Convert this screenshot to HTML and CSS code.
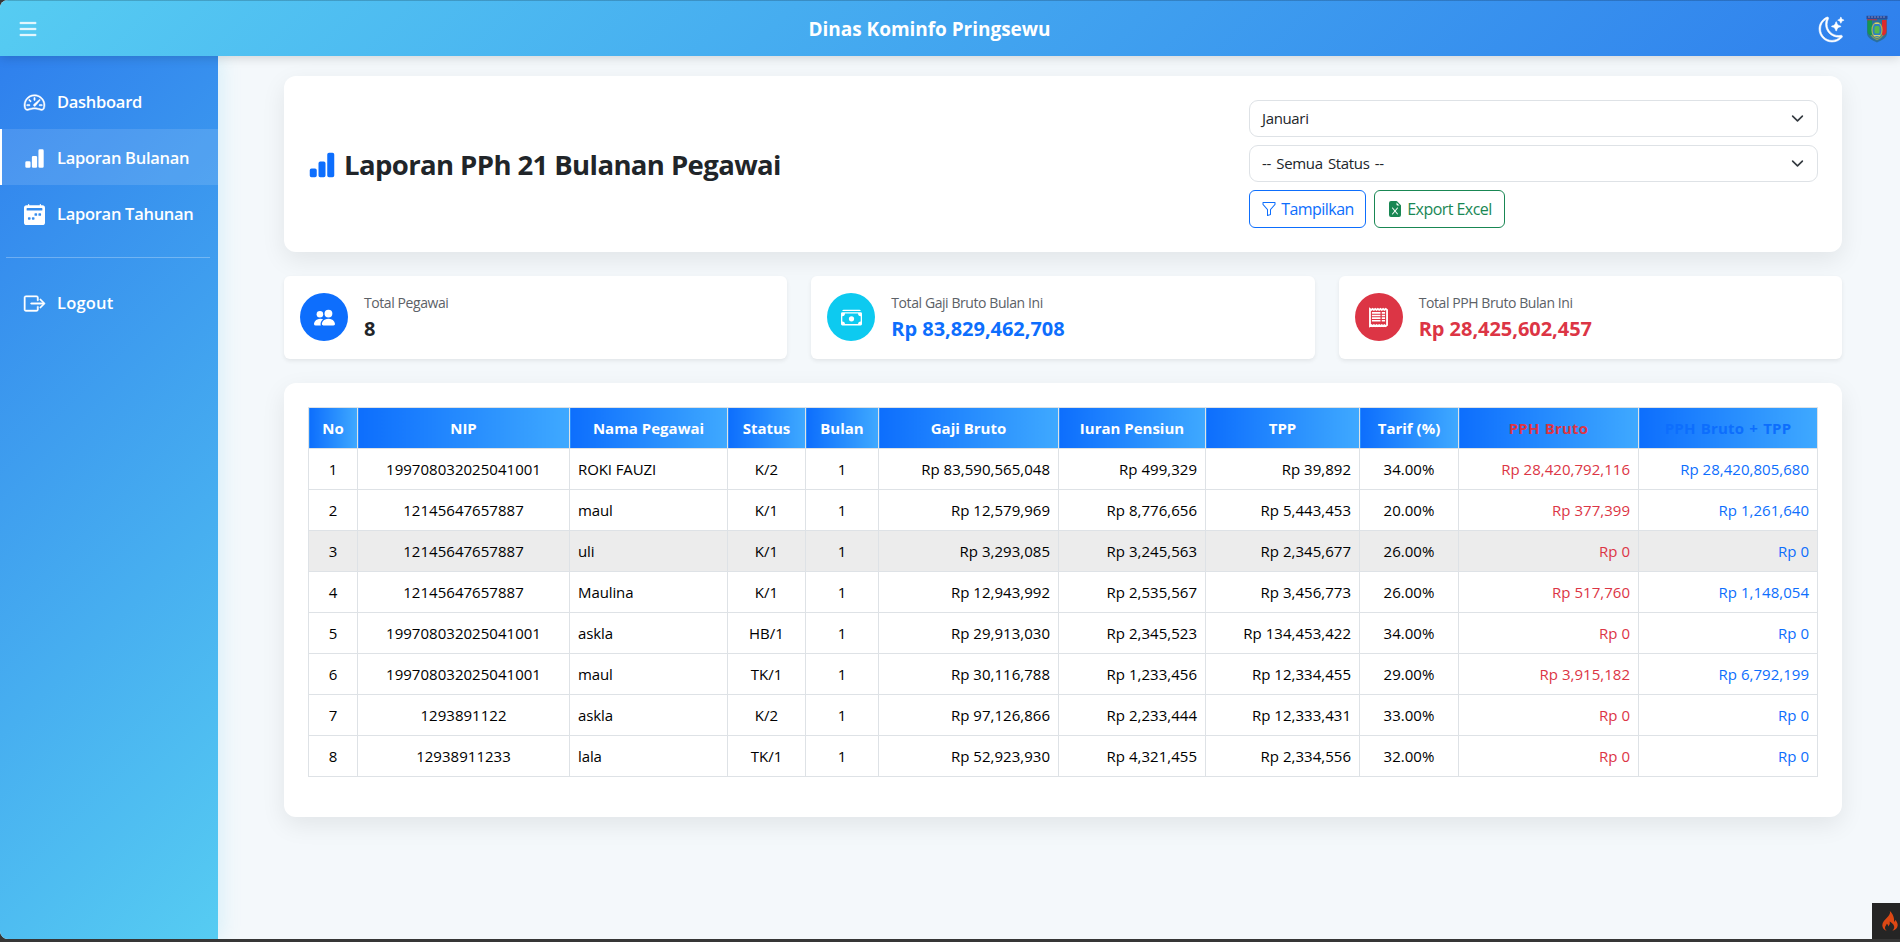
FILE: index.html
```html
<!DOCTYPE html>
<html lang="id">
<head>
<meta charset="utf-8">
<title>Laporan PPh 21 Bulanan Pegawai</title>
<link rel="stylesheet" href="styles.css">
</head>
<body>
<div class="app">
  <header class="topbar">
    <svg class="menu-icon" viewBox="0 0 16 16" fill="currentColor"><path fill-rule="evenodd" d="M2.5 12a.5.5 0 0 1 .5-.5h10a.5.5 0 0 1 0 1H3a.5.5 0 0 1-.5-.5zm0-4a.5.5 0 0 1 .5-.5h10a.5.5 0 0 1 0 1H3a.5.5 0 0 1-.5-.5zm0-4a.5.5 0 0 1 .5-.5h10a.5.5 0 0 1 0 1H3a.5.5 0 0 1-.5-.5z"/></svg>
    <div class="brand">Dinas Kominfo Pringsewu</div>
    <div class="topbar-right">
      <svg class="moon-icon" viewBox="0 0 16 16" fill="currentColor"><path d="M6 .278a.768.768 0 0 1 .08.858 7.208 7.208 0 0 0-.878 3.46c0 4.021 3.278 7.277 7.318 7.277.527 0 1.04-.055 1.533-.16a.787.787 0 0 1 .81.316.733.733 0 0 1-.031.893A8.349 8.349 0 0 1 8.344 16C3.734 16 0 12.286 0 7.71 0 4.266 2.114 1.312 5.124.06A.752.752 0 0 1 6 .278zM4.858 1.311A7.269 7.269 0 0 0 1.025 7.71c0 4.02 3.279 7.276 7.319 7.276a7.316 7.316 0 0 0 5.205-2.162c-.337.042-.68.063-1.029.063-4.61 0-8.343-3.714-8.343-8.29 0-1.167.242-2.278.681-3.286z"/><path d="M10.794 3.148a.217.217 0 0 1 .412 0l.387 1.162c.173.518.579.924 1.097 1.097l1.162.387a.217.217 0 0 1 0 .412l-1.162.387a1.734 1.734 0 0 0-1.097 1.097l-.387 1.162a.217.217 0 0 1-.412 0l-.387-1.162A1.734 1.734 0 0 0 9.31 6.593l-1.162-.387a.217.217 0 0 1 0-.412l1.162-.387a1.734 1.734 0 0 0 1.097-1.097l.387-1.162zM13.863.099a.145.145 0 0 1 .274 0l.258.774c.115.346.386.617.732.732l.774.258a.145.145 0 0 1 0 .274l-.774.258a1.156 1.156 0 0 0-.732.732l-.258.774a.145.145 0 0 1-.274 0l-.258-.774a1.156 1.156 0 0 0-.732-.732l-.774-.258a.145.145 0 0 1 0-.274l.774-.258c.346-.115.617-.386.732-.732L13.863.1z"/></svg>
      <svg class="crest" viewBox="0 0 22 28">
        <path d="M1 4h20v14c0 5-5 7-10 9.500C6 25 1 23 1 18z" fill="#2a6f9e"/>
        <path d="M1.500 5H6v16.500C3 20 1.500 19 1.500 16z" fill="#16954f"/>
        <path d="M16 5h4.500v11c0 3-1.500 4-4.500 5.500z" fill="#dc2a2c"/>
        <path d="M.5.800h21v3.400H.5z" fill="#274b9a"/>
        <path d="M2 2h18" stroke="#7d8fc4" stroke-width="1" stroke-dasharray="2 1"/>
        <path d="M1 4.800h10" stroke="#c9343a" stroke-width="1"/>
        <ellipse cx="11" cy="15" rx="5" ry="7.500" fill="#2d7fc4" stroke="#a9b45c" stroke-width="1.200"/>
        <rect x="8.500" y="11" width="5" height="7.500" rx="1.500" fill="#55b84e"/>
        <path d="M9 8.500h4M8 20.500h6" stroke="#d9cf7a" stroke-width="1.200"/>
        <path d="M5 20c2 3 4 4 6 4.500 2-.5 4-1.500 6-4.500" fill="none" stroke="#8b9a55" stroke-width="1.300"/>
      </svg>
    </div>
  </header>
  <div class="layout">
    <nav class="sidebar">
      <a class="nav-item"><svg class="nav-icon bold-icon" viewBox="0 0 16 16" fill="currentColor"><path d="M8 4a.5.5 0 0 1 .5.5V6a.5.5 0 0 1-1 0V4.500A.5.5 0 0 1 8 4zM3.732 5.732a.5.5 0 0 1 .707 0l.915.914a.5.5 0 1 1-.708.708l-.914-.915a.5.5 0 0 1 0-.707zM2 10a.5.5 0 0 1 .5-.5h1.586a.5.5 0 0 1 0 1H2.500A.5.5 0 0 1 2 10zm9.500 0a.5.5 0 0 1 .5-.5h1.500a.5.5 0 0 1 0 1H12a.5.5 0 0 1-.5-.5zm.754-4.246a.389.389 0 0 0-.527-.02L7.547 9.310a.91.91 0 1 0 1.302 1.258l3.434-4.297a.389.389 0 0 0-.029-.518z"/><path fill-rule="evenodd" d="M0 10a8 8 0 1 1 15.547 2.661c-.442 1.253-1.845 1.602-2.932 1.250C11.309 13.488 9.475 13 8 13c-1.474 0-3.310.488-4.615.911-1.087.352-2.490.003-2.932-1.250A7.988 7.988 0 0 1 0 10zm8-7a7 7 0 0 0-6.603 9.329c.203.575.923.876 1.680.630C4.397 12.533 6.358 12 8 12s3.604.532 4.923.960c.757.245 1.477-.056 1.680-.631A7 7 0 0 0 8 3z"/></svg><span>Dashboard</span></a>
      <a class="nav-item active"><svg class="nav-icon" viewBox="0 0 16 16" fill="currentColor"><path d="M1 11a1 1 0 0 1 1-1h2a1 1 0 0 1 1 1v3a1 1 0 0 1-1 1H2a1 1 0 0 1-1-1v-3zm5-4a1 1 0 0 1 1-1h2a1 1 0 0 1 1 1v7a1 1 0 0 1-1 1H7a1 1 0 0 1-1-1V7zm5-5a1 1 0 0 1 1-1h2a1 1 0 0 1 1 1v12a1 1 0 0 1-1 1h-2a1 1 0 0 1-1-1V2z"/></svg><span>Laporan Bulanan</span></a>
      <a class="nav-item"><svg class="nav-icon" viewBox="0 0 16 16" fill="currentColor"><path fill-rule="evenodd" d="M3.500 0a.5.5 0 0 1 .5.5V1h8V.5a.5.5 0 0 1 1 0V1h1a2 2 0 0 1 2 2v11a2 2 0 0 1-2 2H2a2 2 0 0 1-2-2V3a2 2 0 0 1 2-2h1V.5a.5.5 0 0 1 .5-.5zM2.500 3a.5.5 0 0 0-.5.5v1a.5.5 0 0 0 .5.5h11a.5.5 0 0 0 .5-.5v-1a.5.5 0 0 0-.5-.5zM8.500 7a.5.5 0 0 0-.5.5v1a.5.5 0 0 0 .5.5h1a.5.5 0 0 0 .5-.5v-1a.5.5 0 0 0-.5-.5zm3 0a.5.5 0 0 0-.5.5v1a.5.5 0 0 0 .5.5h1a.5.5 0 0 0 .5-.5v-1a.5.5 0 0 0-.5-.5zm-8 3a.5.5 0 0 0-.5.5v1a.5.5 0 0 0 .5.5h1a.5.5 0 0 0 .5-.5v-1a.5.5 0 0 0-.5-.5zm3 0a.5.5 0 0 0-.5.5v1a.5.5 0 0 0 .5.5h1a.5.5 0 0 0 .5-.5v-1a.5.5 0 0 0-.5-.5z"/></svg><span>Laporan Tahunan</span></a>
      <hr class="nav-divider">
      <a class="nav-item nav-logout"><svg class="nav-icon bold-icon" viewBox="0 0 16 16" fill="currentColor"><path fill-rule="evenodd" d="M10 12.500a.5.5 0 0 1-.5.5h-8a.5.5 0 0 1-.5-.5v-9a.5.5 0 0 1 .5-.5h8a.5.5 0 0 1 .5.5v2a.5.5 0 0 0 1 0v-2A1.500 1.500 0 0 0 9.500 2h-8A1.500 1.500 0 0 0 0 3.500v9A1.500 1.500 0 0 0 1.500 14h8a1.500 1.500 0 0 0 1.500-1.500v-2a.5.5 0 0 0-1 0v2z"/><path fill-rule="evenodd" d="M15.854 8.354a.5.5 0 0 0 0-.708l-3-3a.5.5 0 0 0-.708.708L14.293 7.500H5.500a.5.5 0 0 0 0 1h8.793l-2.147 2.146a.5.5 0 0 0 .708.708l3-3z"/></svg><span>Logout</span></a>
    </nav>
    <main class="content">
      <section class="card heading-card">
        <h1 class="page-title"><svg class="title-icon" viewBox="0 0 16 16" fill="currentColor"><path d="M1 11a1 1 0 0 1 1-1h2a1 1 0 0 1 1 1v3a1 1 0 0 1-1 1H2a1 1 0 0 1-1-1v-3zm5-4a1 1 0 0 1 1-1h2a1 1 0 0 1 1 1v7a1 1 0 0 1-1 1H7a1 1 0 0 1-1-1V7zm5-5a1 1 0 0 1 1-1h2a1 1 0 0 1 1 1v12a1 1 0 0 1-1 1h-2a1 1 0 0 1-1-1V2z"/></svg><span>Laporan PPh 21 Bulanan Pegawai</span></h1>
        <div class="filters">
          <div class="select"><span>Januari</span><svg class="chevron" viewBox="0 0 16 16"><path d="m2 5 6 6 6-6"/></svg></div>
          <div class="select"><span>-- Semua Status --</span><svg class="chevron" viewBox="0 0 16 16"><path d="m2 5 6 6 6-6"/></svg></div>
          <div class="buttons">
            <button class="btn btn-show"><svg class="btn-icon" viewBox="0 0 16 16" fill="currentColor"><path d="M1.500 1.500A.5.5 0 0 1 2 1h12a.5.5 0 0 1 .5.5v2a.5.5 0 0 1-.128.334L10 8.692V13.500a.5.5 0 0 1-.342.474l-3 1A.5.5 0 0 1 6 14.500V8.692L1.628 3.834A.5.5 0 0 1 1.500 3.500v-2zm1 .5v1.308l4.372 4.858A.5.5 0 0 1 7 8.500v5.306l2-.666V8.500a.5.5 0 0 1 .128-.334L13.500 3.308V2h-11z"/></svg><span>Tampilkan</span></button>
            <button class="btn btn-export"><svg class="btn-icon" viewBox="0 0 16 16" fill="currentColor"><path d="M9.293 0H4a2 2 0 0 0-2 2v12a2 2 0 0 0 2 2h8a2 2 0 0 0 2-2V4.707A1 1 0 0 0 13.707 4L10 .293A1 1 0 0 0 9.293 0zM9.500 3.500v-2l3 3h-2a1 1 0 0 1-1-1zM5.884 6.680 8 9.219l2.116-2.540a.5.5 0 1 1 .768.641L8.651 10l2.233 2.680a.5.5 0 0 1-.768.640L8 10.781l-2.116 2.540a.5.5 0 0 1-.768-.641L7.349 10 5.116 7.320a.5.5 0 1 1 .768-.640z"/></svg><span>Export Excel</span></button>
          </div>
        </div>
      </section>
      <section class="stats">
        <div class="stat">
          <div class="stat-badge badge-blue"><svg class="stat-icon" viewBox="0 0 16 16" fill="currentColor"><path d="M7 14s-1 0-1-1 1-4 5-4 5 3 5 4-1 1-1 1H7zm4-6a3 3 0 1 0 0-6 3 3 0 0 0 0 6z"/><path d="M5.216 14A2.238 2.238 0 0 1 5 13c0-1.355.680-2.750 1.936-3.720A6.325 6.325 0 0 0 5 9c-4 0-5 3-5 4s1 1 1 1h4.216z"/><path d="M4.500 8a2.500 2.500 0 1 0 0-5 2.500 2.500 0 0 0 0 5z"/></svg></div>
          <div class="stat-body"><div class="stat-label">Total Pegawai</div><div class="stat-value">8</div></div>
        </div>
        <div class="stat">
          <div class="stat-badge badge-cyan"><svg class="stat-icon" viewBox="0 0 16 16" fill="currentColor"><path d="M1 3a1 1 0 0 1 1-1h12a1 1 0 0 1 1 1H1zm7 8a2 2 0 1 0 0-4 2 2 0 0 0 0 4z"/><path d="M0 5a1 1 0 0 1 1-1h14a1 1 0 0 1 1 1v8a1 1 0 0 1-1 1H1a1 1 0 0 1-1-1V5zm3 0a2 2 0 0 1-2 2v4a2 2 0 0 1 2 2h10a2 2 0 0 1 2-2V7a2 2 0 0 1-2-2H3z"/></svg></div>
          <div class="stat-body"><div class="stat-label">Total Gaji Bruto Bulan Ini</div><div class="stat-value value-blue">Rp 83,829,462,708</div></div>
        </div>
        <div class="stat">
          <div class="stat-badge badge-red"><svg class="stat-icon" viewBox="0 0 16 16" fill="none" stroke="currentColor"><path d="M1.500 1.500l1 .7 1-.7 1 .7 1-.7 1 .7 1-.7 1 .7 1-.7 1 .7 1-.7 1 .7 1-.7 1 .7V13.800l-1 .7-1-.7-1 .7-1-.7-1 .7-1-.7-1 .7-1-.7-1 .7-1-.7-1 .7-1-.7-1 .7z" stroke-width="1.400"/><path d="M3 4.500h6.500M3 6.500h6.500M3 8.500h6.500M3 10.500h6.500M10.500 4.500h2.500M10.500 6.500h2.500M10.500 8.500h2.500M10.500 10.500h2.500" stroke-width="1.200"/></svg></div>
          <div class="stat-body"><div class="stat-label">Total PPH Bruto Bulan Ini</div><div class="stat-value value-red">Rp 28,425,602,457</div></div>
        </div>
      </section>
      <section class="card table-card">
        <table class="report">
          <colgroup><col class="c-no"><col class="c-nip"><col class="c-name"><col class="c-status"><col class="c-month"><col class="c-gaji"><col class="c-iuran"><col class="c-tpp"><col class="c-tarif"><col class="c-pph"><col class="c-total"></colgroup>
          <thead><tr><th>No</th><th>NIP</th><th>Nama Pegawai</th><th>Status</th><th>Bulan</th><th>Gaji Bruto</th><th>Iuran Pensiun</th><th>TPP</th><th>Tarif (%)</th><th class="red">PPH Bruto</th><th class="blue">PPH Bruto + TPP</th></tr></thead>
          <tbody>
            <tr><td>1</td><td>199708032025041001</td><td class="name">ROKI FAUZI</td><td>K/2</td><td>1</td><td class="num">Rp 83,590,565,048</td><td class="num">Rp 499,329</td><td class="num">Rp 39,892</td><td>34.00%</td><td class="num red">Rp 28,420,792,116</td><td class="num blue">Rp 28,420,805,680</td></tr>
            <tr><td>2</td><td>12145647657887</td><td class="name">maul</td><td>K/1</td><td>1</td><td class="num">Rp 12,579,969</td><td class="num">Rp 8,776,656</td><td class="num">Rp 5,443,453</td><td>20.00%</td><td class="num red">Rp 377,399</td><td class="num blue">Rp 1,261,640</td></tr>
            <tr class="hovered"><td>3</td><td>12145647657887</td><td class="name">uli</td><td>K/1</td><td>1</td><td class="num">Rp 3,293,085</td><td class="num">Rp 3,245,563</td><td class="num">Rp 2,345,677</td><td>26.00%</td><td class="num red">Rp 0</td><td class="num blue">Rp 0</td></tr>
            <tr><td>4</td><td>12145647657887</td><td class="name">Maulina</td><td>K/1</td><td>1</td><td class="num">Rp 12,943,992</td><td class="num">Rp 2,535,567</td><td class="num">Rp 3,456,773</td><td>26.00%</td><td class="num red">Rp 517,760</td><td class="num blue">Rp 1,148,054</td></tr>
            <tr><td>5</td><td>199708032025041001</td><td class="name">askla</td><td>HB/1</td><td>1</td><td class="num">Rp 29,913,030</td><td class="num">Rp 2,345,523</td><td class="num">Rp 134,453,422</td><td>34.00%</td><td class="num red">Rp 0</td><td class="num blue">Rp 0</td></tr>
            <tr><td>6</td><td>199708032025041001</td><td class="name">maul</td><td>TK/1</td><td>1</td><td class="num">Rp 30,116,788</td><td class="num">Rp 1,233,456</td><td class="num">Rp 12,334,455</td><td>29.00%</td><td class="num red">Rp 3,915,182</td><td class="num blue">Rp 6,792,199</td></tr>
            <tr><td>7</td><td>1293891122</td><td class="name">askla</td><td>K/2</td><td>1</td><td class="num">Rp 97,126,866</td><td class="num">Rp 2,233,444</td><td class="num">Rp 12,333,431</td><td>33.00%</td><td class="num red">Rp 0</td><td class="num blue">Rp 0</td></tr>
            <tr><td>8</td><td>12938911233</td><td class="name">lala</td><td>TK/1</td><td>1</td><td class="num">Rp 52,923,930</td><td class="num">Rp 4,321,455</td><td class="num">Rp 2,334,556</td><td>32.00%</td><td class="num red">Rp 0</td><td class="num blue">Rp 0</td></tr>
          </tbody>
        </table>
      </section>
    </main>
  </div>
  <div class="debug-toggle"><svg class="flame" viewBox="0 0 16 20"><path d="M7.800 0c1 2.500-.8 4.300-2.700 6.600C3 9 .3 11.200.3 14.300c0 2.600 1.700 4.700 4.300 5.400-1.400-1-1.800-2.300-1.500-3.600.3-1.200 1.300-2 1.600-3.300 1 .6 1.500 1.500 1.400 2.600 1.500-1.300 2.200-2.900 1.500-4.900 2.600 1.500 5 3.700 4.600 6.300-.2 1.200-.8 2.100-1.800 2.900 3-.6 5.200-2.600 5.300-5.400.1-2.300-1.300-3.700-2.200-5.500-.3 1-.7 1.600-1.500 2 .6-3.700-1.200-8.300-4.200-10.800z" fill="#dd4814"/></svg></div>
</div>
</body>
</html>
```
FILE: styles.css
```css
* { box-sizing: border-box; }

body {
  margin: 0;
  height: 942px;
  overflow: hidden;
  background: #363636;
  color: #212529;
  font-family: "Open Sans", "Noto Sans", sans-serif;
  font-size: 16px;
  line-height: 24px;
}

.app {
  position: relative;
  display: flex;
  flex-direction: column;
  height: 939px;
  border-radius: 8px 0 0 8px;
  overflow: hidden;
  background: #f4f8fb;
}

.topbar {
  z-index: 2;
  display: flex;
  flex: none;
  align-items: center;
  height: 56px;
  padding: 1px 12px 0 16px;
  border-top: 1px solid rgba(0, 0, 0, 0.18);
  background: linear-gradient(135deg, #56ccf2, #2f80ed) border-box;
  box-shadow: 0 2px 10px rgba(0, 0, 0, 0.15);
  color: #fff;
}

.menu-icon {
  width: 24px;
  height: 24px;
  stroke: currentColor;
  stroke-width: 0.3;
}

.brand {
  flex: 1;
  text-align: center;
  font-size: 19px;
  font-weight: 700;
  letter-spacing: -0.03px;
}

.topbar-right { display: flex; align-items: center; gap: 22px; }

.moon-icon {
  width: 25px;
  height: 25px;
  overflow: visible;
  stroke: currentColor;
  stroke-width: 0.35;
}

.crest { width: 22px; height: 28px; }

.layout { display: flex; flex: 1; min-height: 0; }

.sidebar {
  z-index: 1;
  flex: none;
  width: 218px;
  padding-top: 17px;
  background: linear-gradient(135deg, #2f80ed, #56ccf2);
  box-shadow: 2px 0 20px rgba(86, 204, 242, 0.2);
}

.nav-item {
  display: flex;
  align-items: center;
  gap: 12px;
  height: 56px;
  padding: 2px 0 0 22px;
  border-left: 2px solid transparent;
  color: #fff;
  font-size: 16.5px;
  font-weight: 600;
  letter-spacing: -0.28px;
  white-space: nowrap;
}

.nav-item.active {
  border-left-color: #fff;
  background: rgba(255, 255, 255, 0.12);
}

.nav-item.nav-logout { letter-spacing: 0.2px; }

.nav-icon { flex: none; width: 21px; height: 21px; overflow: visible; }
.bold-icon { stroke: currentColor; stroke-width: 0.35; }

.nav-divider {
  margin: 16px 8px 16px 6px;
  border: 0;
  border-top: 1px solid rgba(255, 255, 255, 0.28);
}

.content { flex: 1; padding: 20px 59px 0 66px; }

.card {
  border-radius: 12px;
  background: #fff;
  box-shadow: 0 8px 24px rgba(0, 0, 0, 0.08);
}

.heading-card {
  display: flex;
  align-items: center;
  justify-content: space-between;
  height: 176px;
  padding: 24px;
}

.page-title {
  display: flex;
  align-items: center;
  gap: 8px;
  margin: 0;
  padding-top: 2px;
  font-size: 27.5px;
  font-weight: 700;
  line-height: 34px;
  letter-spacing: -0.6px;
  white-space: nowrap;
}

.title-icon { width: 28px; height: 28px; color: #0d6efd; }

.filters { display: flex; flex-direction: column; gap: 8px; width: 569px; }

.select {
  display: flex;
  align-items: center;
  justify-content: space-between;
  height: 37px;
  padding: 0 13px 1px 12px;
  border: 1px solid #dee2e6;
  border-radius: 9px;
  font-size: 15px;
  letter-spacing: -0.35px;
  word-spacing: 1.8px;
}

.chevron {
  width: 13px;
  height: 13px;
  fill: none;
  stroke: #343a40;
  stroke-width: 2;
  stroke-linecap: round;
  stroke-linejoin: round;
}

.buttons { display: flex; gap: 8px; }

.btn {
  display: flex;
  align-items: center;
  justify-content: center;
  gap: 4px;
  height: 38px;
  padding: 0;
  border: 1px solid currentColor;
  border-radius: 6px;
  background: #fff;
  font: inherit;
  letter-spacing: -0.55px;
  white-space: nowrap;
}

.btn-show { width: 117px; color: #0d6efd; }
.btn-export { width: 131px; color: #198754; }
.btn-icon { width: 16px; height: 16px; }

.stats {
  display: grid;
  grid-template-columns: repeat(3, 1fr);
  gap: 24px;
  margin: 24px 0;
}

.stat {
  display: flex;
  align-items: center;
  gap: 16px;
  height: 83px;
  padding: 0 16px 1px;
  border-radius: 6px;
  background: #fff;
  box-shadow: 0 2px 4px rgba(0, 0, 0, 0.075);
}

.stat-badge {
  display: flex;
  align-items: center;
  justify-content: center;
  width: 48px;
  height: 48px;
  border-radius: 50%;
  color: #fff;
}

.badge-blue { background: #0d6efd; }
.badge-cyan { background: #0dcaf0; }
.badge-red { background: #dc3545; }
.stat-icon { width: 21px; height: 21px; }

.stat-body { padding-top: 2px; }
.stat-label { color: #5c6167; font-size: 14px; line-height: 22px; letter-spacing: -0.42px; }
.stat-value { font-size: 20px; font-weight: 700; line-height: 30px; letter-spacing: -0.04px; }
.value-blue, .blue { color: #0d6efd; }
.value-red, .red { color: #dc3545; }

.table-card { height: 434px; padding: 24px; }

.report {
  width: 100%;
  table-layout: fixed;
  border-collapse: collapse;
}

.c-no { width: 49px; }
.c-nip { width: 212px; }
.c-name { width: 158px; }
.c-status { width: 78px; }
.c-month { width: 73px; }
.c-gaji { width: 180px; }
.c-iuran { width: 147px; }
.c-tpp { width: 154px; }
.c-tarif { width: 99px; }
.c-pph { width: 180px; }
.c-total { width: 179px; }

.report th, .report td {
  height: 41px;
  padding: 0 8px;
  border: 1px solid #dee2e6;
  text-align: center;
  vertical-align: middle;
  white-space: nowrap;
}

.report th {
  background: linear-gradient(90deg, #0d6efd, #3fa9ff);
  color: #fff;
  font-size: 15px;
  font-weight: 700;
}

.report td { color: #000; font-size: 15px; letter-spacing: 0.03px; }
.report .name { text-align: left; letter-spacing: -0.1px; }
.report .num { text-align: right; }
.report .red { color: #dc3545; }
.report .blue { color: #0d6efd; }
.report th.red, .report th.blue { letter-spacing: 0.2px; word-spacing: 1px; }
.report .hovered td { background: #ececec; }

.debug-toggle {
  position: absolute;
  right: 0;
  bottom: 0;
  z-index: 3;
  display: flex;
  align-items: center;
  width: 28px;
  height: 36px;
  padding-left: 10px;
  overflow: hidden;
  background: #252525;
}

.flame { flex: none; width: 16px; height: 20px; }
```
